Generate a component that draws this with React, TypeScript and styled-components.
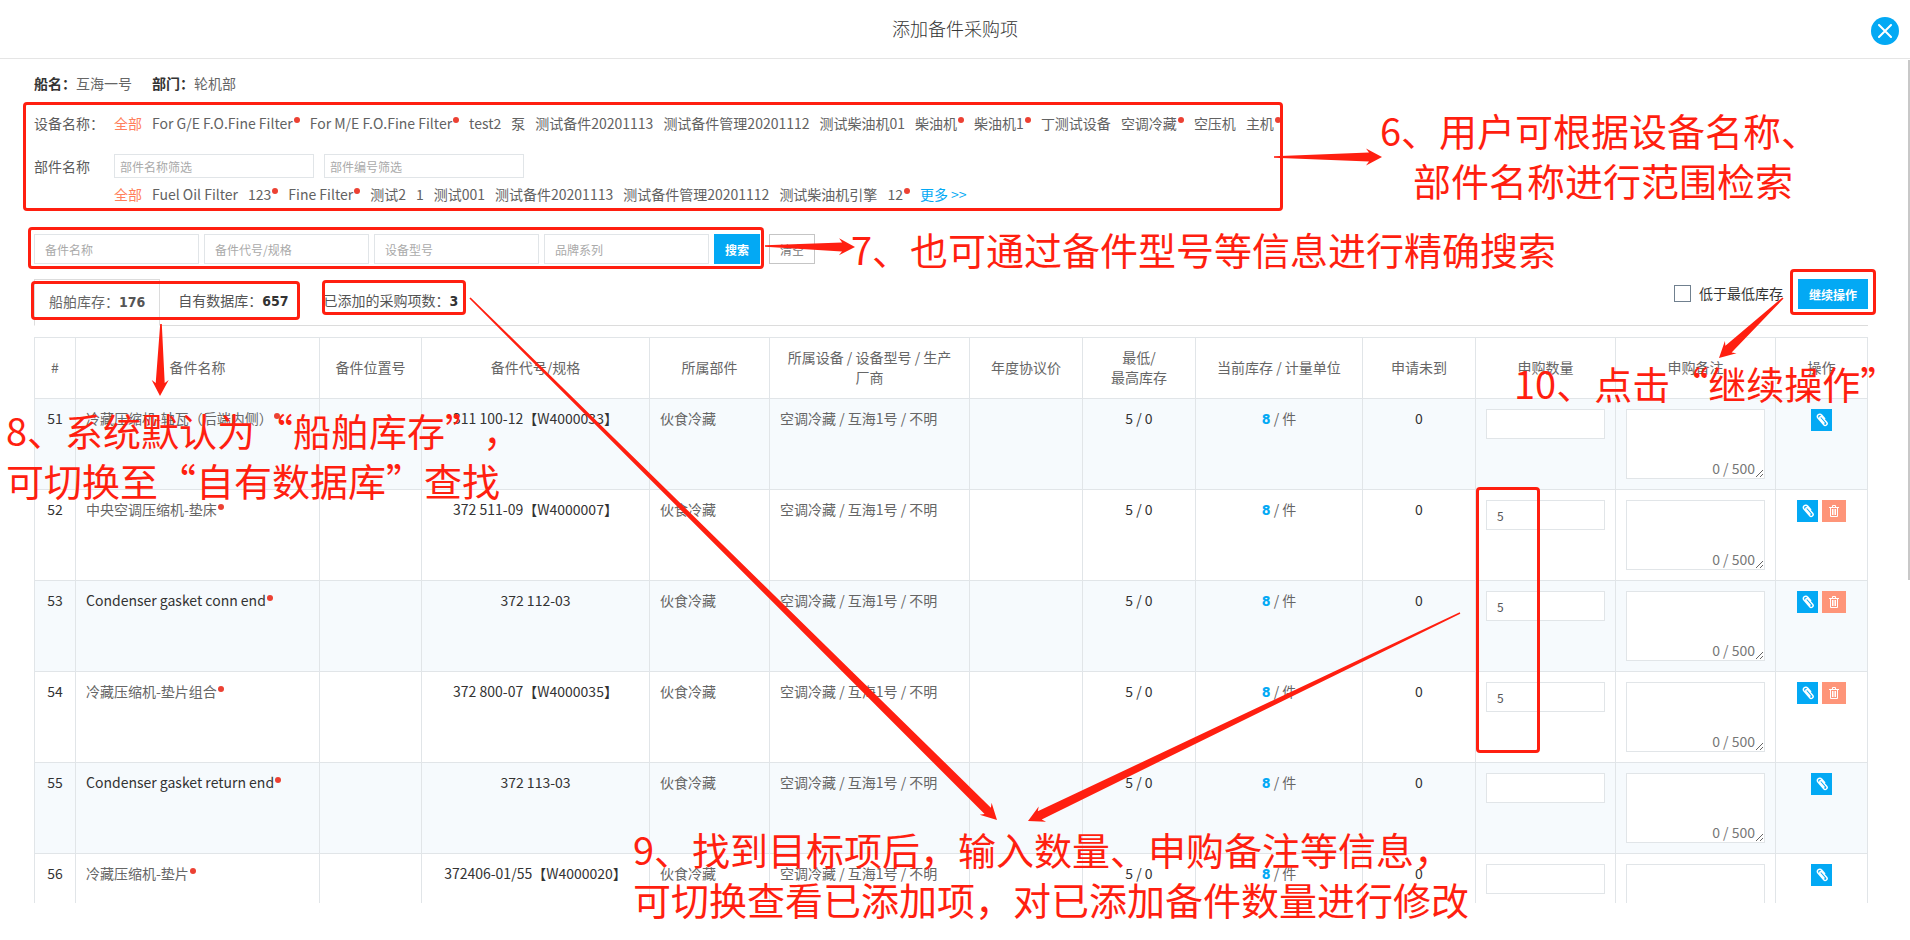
import React from "react";
import styled, { createGlobalStyle, css } from "styled-components";

const BLUE = "#03a9f4";
const RED = "#ff1f10";
const LINE = "#e1e5e8";

const GlobalStyle = createGlobalStyle`
  * { box-sizing: border-box; }
  body {
    margin: 0;
    background: #fff;
    color: #333;
    font-family: "Noto Sans CJK SC", sans-serif;
    font-size: 14px;
    line-height: 20px;
  }
  button, input, textarea { font-family: inherit; border-radius: 0; }
`;

const Dialog = styled.div`
  position: relative;
  display: flex;
  flex-direction: column;
  height: 100vh;
  overflow: hidden;
  padding-bottom: 37px;
`;

const Header = styled.header`
  display: flex;
  flex: none;
  align-items: center;
  justify-content: center;
  height: 59px;
  padding-bottom: 2px;
  border-bottom: 1px solid #e5e5e5;
`;

const Title = styled.h1`
  margin: 0;
  font-size: 18px;
  font-weight: 300;
  line-height: 24px;
`;

const CloseButton = styled.button`
  position: absolute;
  top: 17px;
  right: 11px;
  display: flex;
  align-items: center;
  justify-content: center;
  width: 28px;
  height: 28px;
  padding: 0;
  border: 0;
  border-radius: 50%;
  background: ${BLUE};
`;

const Scrollbar = styled.div`
  position: absolute;
  top: 60px;
  right: 0;
  width: 2px;
  height: 520px;
  background: #c8c8c8;
`;

const Content = styled.main`
  flex: 1;
  min-height: 0;
  overflow: hidden;
  padding: 14px 42px 0 34px;
`;

const Summary = styled.div`
  display: flex;
  gap: 20px;
  color: #666;
`;

const SummaryName = styled.strong`
  color: #333;
`;

const FilterRow = styled.div<{ $top: number }>`
  display: flex;
  align-items: center;
  margin-top: ${(p) => p.$top}px;
  color: #5c5c5c;
`;

const FilterLabel = styled.span`
  flex: none;
  width: 80px;
`;

const Options = styled.div`
  display: flex;
  gap: 10px;
  white-space: nowrap;
`;

const Option = styled.a<{ $tone?: "active" | "more" }>`
  display: flex;
  text-decoration: none;
  color: ${(p) =>
    p.$tone === "active" ? "#ff7f5c" : p.$tone === "more" ? BLUE : "#626262"};
`;

const Dot = styled.span`
  display: inline-block;
  width: 6px;
  height: 6px;
  margin: 4px 0 0 1px;
  border-radius: 50%;
  background: #ec4133;
  vertical-align: top;
`;

const TextInput = styled.input<{ $size: "small" | "search" | "cell" }>`
  display: block;
  border: 1px solid ${LINE};
  background: #fff;
  color: #555;
  font-size: 12px;
  outline: 0;
  ${(p) =>
    p.$size === "small"
      ? css`width: 200px; height: 24px; padding: 0 5px;`
      : p.$size === "search"
        ? css`width: 165px; height: 30px; padding: 0 10px;`
        : css`width: 100%; height: 30px; padding: 0 10px;`}
  &::placeholder { color: #aaa; opacity: 1; }
`;

const SearchBar = styled.form`
  display: flex;
  gap: 5px;
  margin-top: 30px;
`;

const Button = styled.button<{ $plain?: boolean }>`
  height: 30px;
  padding: 0 11px;
  border: 0;
  background: ${BLUE};
  color: #fff;
  font-size: 12px;
  font-weight: 700;
  ${(p) =>
    p.$plain &&
    css`
      margin-left: 4px;
      padding: 0 10px;
      border: 1px solid #c5c5c5;
      background: #fff;
      color: #777;
      font-weight: 400;
    `}
`;

const TabBar = styled.div`
  display: flex;
  height: 47px;
  margin-top: 15px;
`;

const Tab = styled.button<{ $active?: boolean }>`
  padding: 0 17px 5px 18px;
  border: 0;
  border-bottom: 1px solid #dcdcdc;
  background: none;
  color: #555;
  font-size: 14px;
  white-space: nowrap;
  ${(p) =>
    p.$active &&
    css`
      padding: 0 14px 4px;
      border: 1px solid #dcdcdc;
      border-bottom-color: transparent;
      color: #666;
    `}
`;

const Count = styled.strong<{ $tone?: string }>`
  color: ${(p) => p.$tone ?? "#333"};
  font-family: "DejaVu Sans Condensed", "Noto Sans CJK SC", sans-serif;
`;

const TabSide = styled.div`
  display: flex;
  flex: 1;
  align-items: flex-start;
  justify-content: flex-end;
  gap: 15px;
  border-bottom: 1px solid #dcdcdc;
`;

const CheckLabel = styled.label`
  display: flex;
  align-items: center;
  gap: 8px;
  height: 28px;
`;

const Check = styled.input`
  appearance: none;
  width: 17px;
  height: 17px;
  margin: 0;
  border: 1px solid #70808f;
  background: #fff;
`;

const Table = styled.table`
  width: 100%;
  margin-top: 11px;
  border-collapse: collapse;
  table-layout: fixed;
`;

const Th = styled.th`
  height: 61px;
  padding: 0 14px 2px;
  border: 1px solid ${LINE};
  color: #666;
  font-weight: 400;
`;

const Row = styled.tr`
  height: 91px;
  line-height: 18px;
  &:nth-child(odd) { background: #f6fafd; }
`;

const Td = styled.td<{ $center?: boolean }>`
  padding: 10px;
  border: 1px solid ${LINE};
  vertical-align: top;
  text-align: ${(p) => (p.$center ? "center" : "left")};
  white-space: nowrap;
`;

const Muted = styled.span`
  color: #666;
`;

const NoteBox = styled.div`
  position: relative;
`;

const Note = styled.textarea`
  display: block;
  width: 100%;
  height: 70px;
  border: 1px solid ${LINE};
  background: #fff;
  outline: 0;
`;

const Counter = styled.span`
  position: absolute;
  right: 10px;
  bottom: 2px;
  color: #777;
`;

const Actions = styled.div`
  display: flex;
  justify-content: center;
  gap: 4px;
`;

const IconButton = styled.button<{ $danger?: boolean }>`
  display: flex;
  align-items: center;
  justify-content: center;
  width: ${(p) => (p.$danger ? 24 : 21)}px;
  height: 22px;
  padding: 0;
  border: 0;
  background: ${(p) => (p.$danger ? "#fe9579" : BLUE)};
`;

const Overlay = styled.div`
  position: absolute;
  inset: 0;
  pointer-events: none;
`;

const Arrows = styled.svg`
  position: absolute;
  top: 0;
  left: 0;
  width: 100%;
  height: 100%;
  fill: ${RED};
`;

type Rect = { x: number; y: number; w: number; h: number };

const Frame = styled.div<{ $r: Rect }>`
  position: absolute;
  left: ${(p) => p.$r.x}px;
  top: ${(p) => p.$r.y}px;
  width: ${(p) => p.$r.w}px;
  height: ${(p) => p.$r.h}px;
  border: 3px solid ${RED};
  border-radius: 4px;
`;

const Remark = styled.p<{ $x: number; $y: number }>`
  position: absolute;
  left: ${(p) => p.$x}px;
  top: ${(p) => p.$y}px;
  margin: 0;
  color: ${RED};
  font-size: 38px;
  line-height: 50px;
  white-space: pre;
  text-spacing-trim: space-all;
`;

const RemarkLine = styled.span<{ $indent?: number }>`
  display: block;
  padding-left: ${(p) => p.$indent ?? 0}px;
`;

type ArrowSpec = { from: [number, number]; to: [number, number] };

function Arrow({ from, to }: ArrowSpec) {
  const dx = to[0] - from[0];
  const dy = to[1] - from[1];
  const len = Math.hypot(dx, dy);
  const at = (back: number, side: number) => {
    const x = to[0] - (dx / len) * back - (dy / len) * side;
    const y = to[1] - (dy / len) * back + (dx / len) * side;
    return `${x.toFixed(1)},${y.toFixed(1)}`;
  };
  const points = [
    at(len, 0.8), at(13, 4.5), at(16, 8.5), at(0, 0),
    at(16, -8.5), at(13, -4.5), at(len, -0.8),
  ];
  return <polygon points={points.join(" ")} />;
}

function ClipIcon() {
  return (
    <svg width="12" height="14" viewBox="0 0 12 14" fill="none" stroke="#fff" strokeWidth="1.5" strokeLinecap="round" aria-hidden="true">
      <path d="M8.6 5.4 5.6 2.1C4.7 1 3.100 1 2.200 1.800 1.300 2.600 1.200 4 2 5l5.600 6.600c.8 1 2 1 2.800.4.900-.8 1-1.900.2-2.800L6 4c-.5-.6-1.300-.6-1.800-.2-.5.400-.5 1.100-.1 1.600l3.900 4.600" />
    </svg>
  );
}

function TrashIcon() {
  return (
    <svg width="10" height="12" viewBox="0 0 10 12" fill="none" stroke="#fff" aria-hidden="true">
      <path d="M0 2.500h10M3.500 2V.5h3V2M1.500 3v8.500h7V3M3.500 4v6M5 4v6M6.500 4v6" />
    </svg>
  );
}

type Item = { text: string; dot?: boolean };

const devices: Item[] = [
  { text: "For G/E F.O.Fine Filter", dot: true },
  { text: "For M/E F.O.Fine Filter", dot: true },
  { text: "test2" },
  { text: "泵" },
  { text: "测试备件20201113" },
  { text: "测试备件管理20201112" },
  { text: "测试柴油机01" },
  { text: "柴油机", dot: true },
  { text: "柴油机1", dot: true },
  { text: "丁测试设备" },
  { text: "空调冷藏", dot: true },
  { text: "空压机" },
  { text: "主机", dot: true },
];

const parts: Item[] = [
  { text: "Fuel Oil Filter" },
  { text: "123", dot: true },
  { text: "Fine Filter", dot: true },
  { text: "测试2" },
  { text: "1" },
  { text: "测试001" },
  { text: "测试备件20201113" },
  { text: "测试备件管理20201112" },
  { text: "测试柴油机引擎" },
  { text: "12", dot: true },
];

const searchFields = ["备件名称", "备件代号/规格", "设备型号", "品牌系列"];

const columns: [number, React.ReactNode][] = [
  [41, "#"],
  [244, "备件名称"],
  [102, "备件位置号"],
  [228, "备件代号/规格"],
  [120, "所属部件"],
  [200, "所属设备 / 设备型号 / 生产厂商"],
  [113, "年度协议价"],
  [113, <>最低/<br />最高库存</>],
  [167, "当前库存 / 计量单位"],
  [113, "申请未到"],
  [140, "申购数量"],
  [160, "申购备注"],
  [92, "操作"],
];

const rows = [
  { no: 51, name: "冷藏压缩机-轴瓦（后端内侧）", muted: true, code: "311 100-12【W4000033】", qty: "" },
  { no: 52, name: "中央空调压缩机-垫床", muted: true, code: "372 511-09【W4000007】", qty: "5" },
  { no: 53, name: "Condenser gasket conn end", code: "372 112-03", qty: "5" },
  { no: 54, name: "冷藏压缩机-垫片组合", muted: true, code: "372 800-07【W4000035】", qty: "5" },
  { no: 55, name: "Condenser gasket return end", code: "372 113-03", qty: "" },
  { no: 56, name: "冷藏压缩机-垫片", muted: true, code: "372406-01/55【W4000020】", qty: "" },
];

const frames: Rect[] = [
  { x: 23, y: 102, w: 1260, h: 109 },
  { x: 28, y: 227, w: 736, h: 42 },
  { x: 31, y: 281, w: 269, h: 39 },
  { x: 322, y: 280, w: 144, h: 35 },
  { x: 1790, y: 269, w: 86, h: 46 },
  { x: 1476, y: 487, w: 64, h: 266 },
];

const arrows: ArrowSpec[] = [
  { from: [1274, 157], to: [1382, 157] },
  { from: [765, 246], to: [855, 247] },
  { from: [161, 324], to: [160, 396] },
  { from: [470, 298], to: [997, 820] },
  { from: [1460, 613], to: [1028, 821] },
  { from: [1783, 298], to: [1719, 358] },
];

function OptionList({ items, more }: { items: Item[]; more?: boolean }) {
  return (
    <Options>
      <Option href="#" $tone="active">全部</Option>
      {items.map((item) => (
        <Option href="#" key={item.text}>
          {item.text}
          {item.dot && <Dot />}
        </Option>
      ))}
      {more && <Option href="#" $tone="more">更多 &gt;&gt;</Option>}
    </Options>
  );
}

export default function App() {
  return (
    <Dialog>
      <GlobalStyle />
      <Header>
        <Title>添加备件采购项</Title>
        <CloseButton type="button" aria-label="关闭">
          <svg width="14" height="14" viewBox="0 0 14 14" stroke="#fff" strokeWidth="2" strokeLinecap="round" aria-hidden="true">
            <path d="M1 1 13 13M13 1 1 13" />
          </svg>
        </CloseButton>
      </Header>
      <Scrollbar />
      <Content>
        <Summary>
          <span><SummaryName>船名：</SummaryName>互海一号</span>
          <span><SummaryName>部门：</SummaryName>轮机部</span>
        </Summary>
        <FilterRow $top={20}>
          <FilterLabel>设备名称：</FilterLabel>
          <OptionList items={devices} />
        </FilterRow>
        <FilterRow $top={21}>
          <FilterLabel>部件名称</FilterLabel>
          <Options>
            <TextInput $size="small" placeholder="部件名称筛选" aria-label="部件名称筛选" />
            <TextInput $size="small" placeholder="部件编号筛选" aria-label="部件编号筛选" />
          </Options>
        </FilterRow>
        <FilterRow $top={6}>
          <FilterLabel />
          <OptionList items={parts} more />
        </FilterRow>
        <SearchBar onSubmit={(e) => e.preventDefault()}>
          {searchFields.map((field) => (
            <TextInput key={field} $size="search" placeholder={field} aria-label={field} />
          ))}
          <Button type="submit">搜索</Button>
          <Button type="reset" $plain>清空</Button>
        </SearchBar>
        <TabBar>
          <Tab type="button" $active>船舶库存：<Count $tone="#555">176</Count></Tab>
          <Tab type="button">自有数据库：<Count>657</Count></Tab>
          <Tab type="button">已添加的采购项数：<Count>3</Count></Tab>
          <TabSide>
            <CheckLabel><Check type="checkbox" />低于最低库存</CheckLabel>
            <Button type="button">继续操作</Button>
          </TabSide>
        </TabBar>
        <Table>
          <colgroup>
            {columns.map(([width], i) => <col key={i} width={width} />)}
          </colgroup>
          <thead>
            <tr>{columns.map(([, head], i) => <Th key={i}>{head}</Th>)}</tr>
          </thead>
          <tbody>
            {rows.map((r) => (
              <Row key={r.no}>
                <Td $center>{r.no}</Td>
                <Td>{r.muted ? <Muted>{r.name}</Muted> : r.name}<Dot /></Td>
                <Td />
                <Td $center>{r.code}</Td>
                <Td><Muted>伙食冷藏</Muted></Td>
                <Td><Muted>空调冷藏 / 互海1号 / 不明</Muted></Td>
                <Td />
                <Td $center>5 / 0</Td>
                <Td $center><Count $tone={BLUE}>8</Count> <Muted>/ 件</Muted></Td>
                <Td $center>0</Td>
                <Td><TextInput $size="cell" defaultValue={r.qty} aria-label={`申购数量 ${r.no}`} /></Td>
                <Td>
                  <NoteBox>
                    <Note aria-label={`申购备注 ${r.no}`} />
                    <Counter>0 / 500</Counter>
                  </NoteBox>
                </Td>
                <Td>
                  <Actions>
                    <IconButton type="button" aria-label="附件"><ClipIcon /></IconButton>
                    {r.qty && <IconButton type="button" $danger aria-label="删除"><TrashIcon /></IconButton>}
                  </Actions>
                </Td>
              </Row>
            ))}
          </tbody>
        </Table>
      </Content>
      <Overlay>
        {frames.map((r, i) => <Frame key={i} $r={r} />)}
        <Arrows aria-hidden="true">
          {arrows.map((a, i) => <Arrow key={i} {...a} />)}
        </Arrows>
        <Remark $x={1380} $y={105}>
          <RemarkLine>6、用户可根据设备名称、</RemarkLine>
          <RemarkLine $indent={33}>部件名称进行范围检索</RemarkLine>
        </Remark>
        <Remark $x={851} $y={224}>7、也可通过备件型号等信息进行精确搜索</Remark>
        <Remark $x={6} $y={405}>
          <RemarkLine>8、系统默认为“船舶库存”，</RemarkLine>
          <RemarkLine>可切换至“自有数据库”查找</RemarkLine>
        </Remark>
        <Remark $x={633} $y={824}>
          <RemarkLine>9、找到目标项后，输入数量、申购备注等信息，</RemarkLine>
          <RemarkLine>可切换查看已添加项，对已添加备件数量进行修改</RemarkLine>
        </Remark>
        <Remark $x={1514} $y={358}>10、点击“继续操作”</Remark>
      </Overlay>
    </Dialog>
  );
}
